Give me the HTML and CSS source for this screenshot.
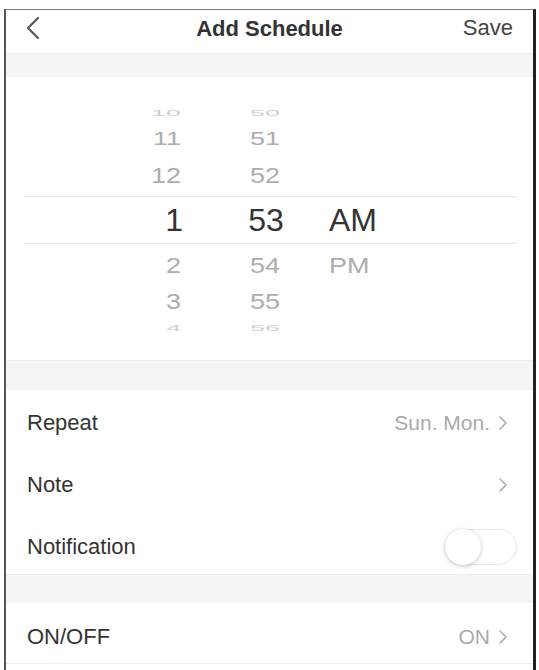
FILE: index.html
```html
<!DOCTYPE html>
<html lang="en">
<head>
    <meta charset="UTF-8">
    <meta name="viewport" content="width=device-width, initial-scale=1.0">
    <title>Add Schedule</title>
    <link rel="stylesheet" href="styles.css">
</head>
<body>
    <div class="screen">
        <header class="topbar">
            <span class="back">
                <svg width="14" height="24" viewBox="0 0 14 24"><polyline points="12,2 2,12 12,22" fill="none" stroke="#555" stroke-width="2.2" stroke-linecap="round" stroke-linejoin="round"/></svg>
            </span>
            <h1>Add Schedule</h1>
            <span class="save">Save</span>
        </header>

        <div class="gap gap-top"></div>

        <div class="picker">
            <div class="prow r-far r-top"><span class="hr">10</span><span class="mn">50</span><span class="ap"></span></div>
            <div class="prow r-near2"><span class="hr">11</span><span class="mn">51</span><span class="ap"></span></div>
            <div class="prow r-near"><span class="hr">12</span><span class="mn">52</span><span class="ap"></span></div>
            <div class="prow selected"><span class="hr">1</span><span class="mn">53</span><span class="ap">AM</span></div>
            <div class="prow r-near"><span class="hr">2</span><span class="mn">54</span><span class="ap">PM</span></div>
            <div class="prow r-near2 r-low"><span class="hr">3</span><span class="mn">55</span><span class="ap"></span></div>
            <div class="prow r-far"><span class="hr">4</span><span class="mn">56</span><span class="ap"></span></div>
        </div>

        <div class="gap"></div>

        <div class="row">
            <span class="label">Repeat</span>
            <span class="value">Sun. Mon.
                <svg class="chev" width="10" height="16" viewBox="0 0 10 16"><polyline points="2,2 8,8 2,14" fill="none" stroke="#aaa" stroke-width="1.6" stroke-linecap="round" stroke-linejoin="round"/></svg>
            </span>
        </div>
        <div class="row">
            <span class="label">Note</span>
            <span class="value">
                <svg class="chev" width="10" height="16" viewBox="0 0 10 16"><polyline points="2,2 8,8 2,14" fill="none" stroke="#aaa" stroke-width="1.6" stroke-linecap="round" stroke-linejoin="round"/></svg>
            </span>
        </div>
        <div class="row row-short">
            <span class="label">Notification</span>
            <span class="switch"><span class="knob"></span></span>
        </div>

        <div class="gap gap-mid"></div>

        <div class="row row-last">
            <span class="label">ON/OFF</span>
            <span class="value">ON
                <svg class="chev" width="10" height="16" viewBox="0 0 10 16"><polyline points="2,2 8,8 2,14" fill="none" stroke="#aaa" stroke-width="1.6" stroke-linecap="round" stroke-linejoin="round"/></svg>
            </span>
        </div>
    </div>
</body>
</html>
```

FILE: styles.css
```css
body { margin: 0; background: #fff; font-family: "Liberation Sans", Arial, sans-serif; color: #333; }
.screen { margin: 9px 3px 0 4px; height: 661px; border-top: 1px solid #777; border-left: 2px solid #555; border-right: 3px solid #222; overflow: hidden; }

.topbar { height: 43px; display: flex; align-items: center; justify-content: space-between; padding: 0 20px 8px 20px; box-sizing: border-box; position: relative; }
.topbar h1 { margin: 0; font-size: 22px; font-weight: bold; color: #333; position: absolute; left: 0; right: 0; top: 6px; text-align: center; pointer-events: none; }
.back { display: flex; }
.save { font-size: 22px; color: #444; }

.gap { height: 30px; background: #f5f5f5; border-top: 1px solid #eee; box-sizing: border-box; }
.gap-top { height: 24px; }
.gap-mid { height: 29px; }

.picker { height: 283px; padding-top: 25px; box-sizing: border-box; }
.prow { display: flex; align-items: center; font-size: 27px; color: #adadad; }
.prow .hr { width: 175px; text-align: right; }
.prow .mn { width: 70px; margin-left: 49px; text-align: center; }
.prow .ap { margin-left: 29px; }
.r-far { height: 24px; color: #cfcfcf; }
.r-far span { transform: scaleY(0.35); }
.r-near2 { height: 30px; }
.r-near2 span { transform: scaleY(0.7); }
.r-low span { transform: scaleY(0.85); }
.r-near { height: 42px; }
.r-near span { transform: scaleY(0.85); }
.r-top { height: 22px; }
.selected { height: 48px; margin: 0 16px 0 19px; border-top: 1px solid #e6e6e6; border-bottom: 1px solid #e6e6e6; box-sizing: border-box; font-size: 32px; color: #333; }
.selected .hr { width: 158px; }
.selected .mn { margin-left: 48px; }
.selected .ap { margin-left: 28px; }

.row { height: 62px; display: flex; align-items: center; justify-content: space-between; padding: 4px 25px 0 21px; box-sizing: border-box; }
.row-short { height: 60px; padding-top: 6px; }
.row-last { height: 61px; padding-top: 7px; border-bottom: 1px solid #eee; }
.label { font-size: 22px; color: #333; }
.value { display: flex; align-items: center; gap: 8px; font-size: 21px; color: #aaa; }
.chev { display: block; }

.switch { width: 72px; height: 36px; margin-right: -9px; border-radius: 18px; border: 1px solid #e4e4e4; box-sizing: border-box; position: relative; background: #fff; }
.knob { position: absolute; left: -1px; top: -1px; width: 36px; height: 36px; border-radius: 50%; background: #fff; box-shadow: 0 1px 4px rgba(0, 0, 0, 0.25); }
```
